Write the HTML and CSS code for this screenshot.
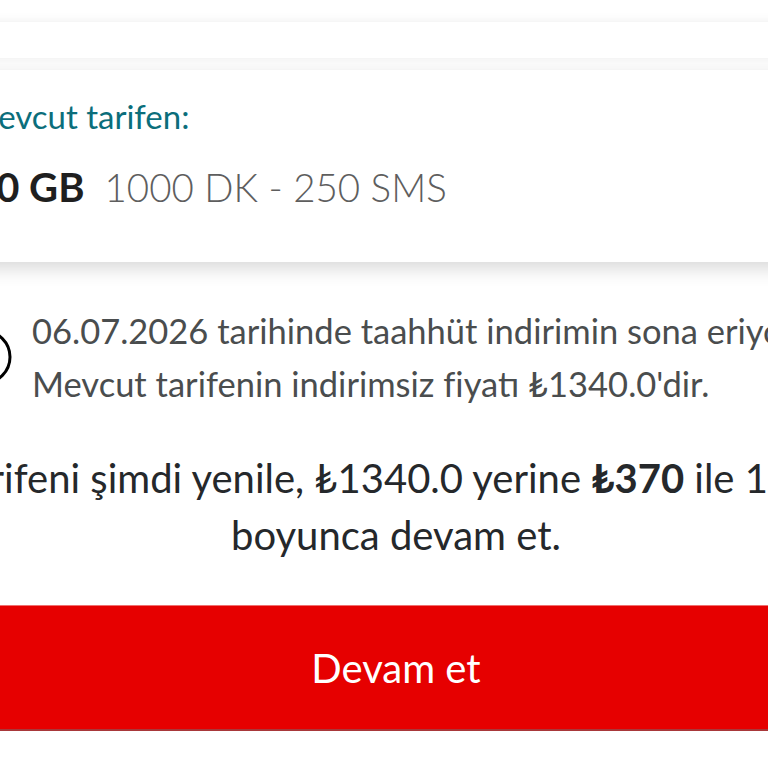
FILE: index.html
```html
<!DOCTYPE html>
<html lang="tr">
  <head>
    <meta charset="UTF-8" />
    <meta name="viewport" content="width=device-width, initial-scale=1.0" />
    <title>Tarife Yenileme</title>
    <link rel="stylesheet" href="styles.css">
  </head>
  <body>
    <div id="page">
      <div class="strip"></div>

      <div class="tariffCard">
        <p class="tariffLabel">Mevcut tarifen:</p>
        <p class="tariffLine">
          <span class="tariffData">20 GB</span>
          <span class="tariffRest">1000 DK - 250 SMS</span>
        </p>
      </div>

      <div class="notice">
        <svg class="noticeIcon" width="56" height="56" viewBox="0 0 56 56">
          <circle cx="28" cy="28" r="26" fill="none" stroke="#000" stroke-width="3" />
          <rect x="26.5" y="16" width="3" height="16" fill="#000" />
          <rect x="26.5" y="36" width="3" height="3.5" fill="#000" />
        </svg>
        <p class="noticeText">
          06.07.2026 tarihinde taahhüt indirimin sona eriyor.<br>
          Mevcut tarifenin indirimsiz fiyatı ₺1340.0'dir.
        </p>
      </div>

      <p class="offer">
        Tarifeni şimdi yenile, ₺1340.0 yerine <b>₺370</b> ile 12 ay boyunca devam et.
      </p>

      <button class="continueButton">Devam et</button>
    </div>
  </body>
</html>
```

FILE: styles.css
```css
html, body {
  margin: 0;
  background: #fff;
  overflow: hidden;
}
body {
  font-family: Lato, "DejaVu Sans", sans-serif;
}
#page {
  width: 940px;
  margin-left: -74px;
}
.strip {
  margin-top: 22px;
  height: 36px;
  background: #fff;
  box-shadow: 0 0 10px rgba(0, 0, 0, 0.08);
}
.tariffCard {
  margin-top: 12px;
  height: 192px;
  box-sizing: border-box;
  padding: 24px 42px 0;
  background: #fff;
  box-shadow: 0 6px 18px rgba(0, 0, 0, 0.16);
}
.tariffLabel {
  margin: 0;
  font-size: 33px;
  line-height: 44px;
  color: #0b6e7b;
}
.tariffLine {
  margin: 22px 0 0 5px;
  display: flex;
  align-items: baseline;
  gap: 20px;
  line-height: 55px;
}
.tariffData {
  font-size: 40px;
  font-weight: 700;
  color: #1f1f1f;
}
.tariffRest {
  font-size: 38.5px;
  font-weight: 300;
  color: #5e5e5e;
}
.notice {
  margin-top: 42px;
  display: flex;
  align-items: center;
  gap: 20px;
  padding-left: 30px;
}
.noticeIcon {
  flex: none;
}
.noticeText {
  margin: 0;
  font-size: 34.5px;
  line-height: 53px;
  color: #4a4d4e;
  white-space: nowrap;
}
.offer {
  margin: 40px 0 0;
  text-align: center;
  font-size: 40px;
  line-height: 57px;
  color: #25282b;
}
.continueButton {
  display: block;
  width: 100%;
  margin-top: 41px;
  height: 126px;
  border: none;
  border-top: 1px solid #ef6f6f;
  border-bottom: 2px solid #a8383a;
  background: #e60000;
  color: #fff;
  font-family: inherit;
  font-size: 40px;
  padding: 0;
}
```
